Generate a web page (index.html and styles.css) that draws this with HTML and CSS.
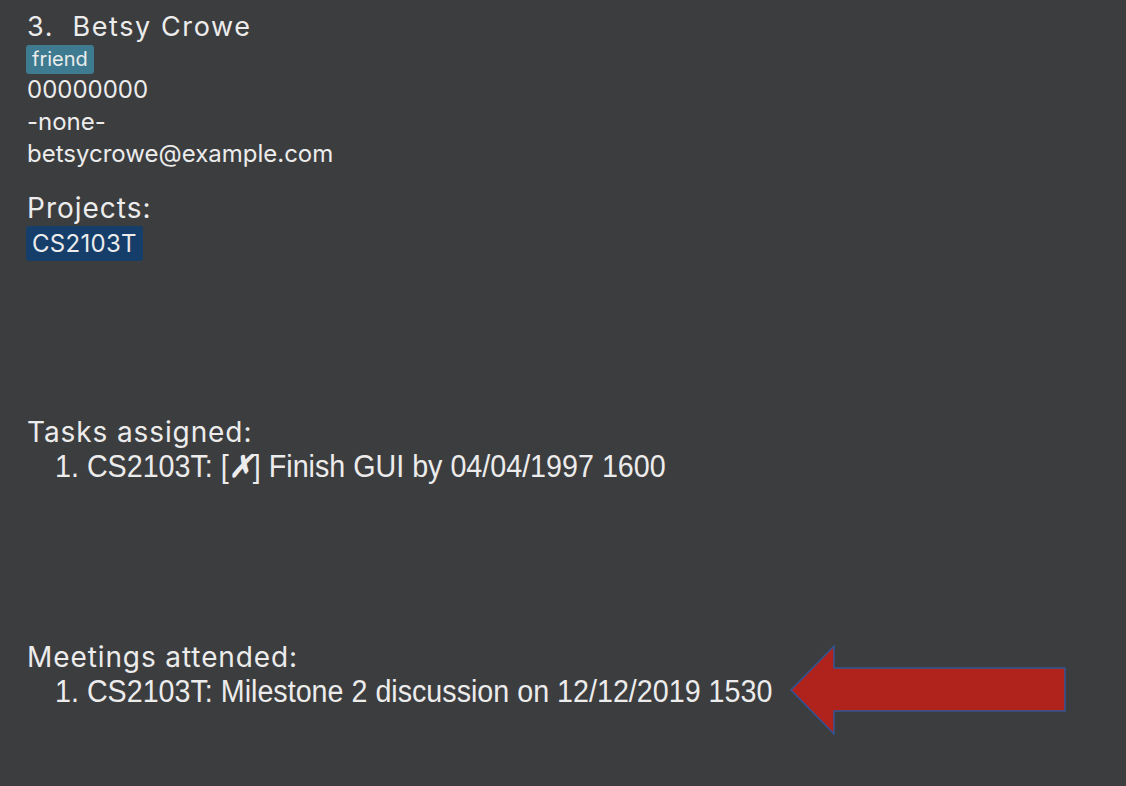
FILE: index.html
```html
<!DOCTYPE html>
<html>
<head>
<meta charset="utf-8">
<link rel="stylesheet" href="styles.css">
</head>
<body>
<div class="card">
  <div class="title">3.&nbsp; Betsy Crowe</div>
  <div class="tags"><span class="tag">friend</span></div>
  <div class="line">00000000</div>
  <div class="line">-none-</div>
  <div class="line">betsycrowe@example.com</div>
  <div class="heading projects-h">Projects:</div>
  <div class="tags"><span class="proj">CS2103T</span></div>
  <div class="section tasks">
    <div class="heading">Tasks assigned:</div>
    <div class="item"><span class="item-text">1. CS2103T: [<b class="x">✗</b>] Finish GUI by 04/04/1997 1600</span></div>
  </div>
  <div class="section meetings">
    <div class="heading">Meetings attended:</div>
    <div class="item"><span class="item-text">1. CS2103T: Milestone 2 discussion on 12/12/2019 1530</span></div>
  </div>
</div>
<svg class="arrow" width="290" height="100" viewBox="780 640 290 100">
  <polygon points="791,690 834,646 834,668 1065,668 1065,711 834,711 834,734" fill="#b0231c" stroke="#2f5597" stroke-width="1.5"/>
</svg>
</body>
</html>
```
FILE: styles.css
```css
html, body {
  margin: 0;
  padding: 0;
  background: #3c3d3f;
  height: 100%;
}
body {
  color: #ececec;
  font-family: Inter, "Noto Sans", sans-serif;
  position: relative;
  overflow: hidden;
}
.card {
  padding: 10px 0 0 27px;
  display: flex;
  flex-direction: column;
  align-items: flex-start;
}
.title {
  font-size: 27px;
  line-height: 34px;
  letter-spacing: 1.6px;
}
.tags {
  display: flex;
  margin-left: -1px;
}
.tag {
  background: #3e7b91;
  border-radius: 3px;
  font-size: 20px;
  line-height: 29px;
  padding: 0 6px;
  margin-top: 1px;
}
.line {
  font-size: 24px;
  line-height: 32px;
}
.heading {
  font-size: 28px;
  line-height: 34px;
  letter-spacing: 0.9px;
}
.projects-h {
  margin-top: 21px;
  letter-spacing: 1px;
}
.proj {
  background: #153e6a;
  border-radius: 3px;
  font-size: 24px;
  line-height: 35px;
  padding: 0 6px;
  margin-top: 1px;
  letter-spacing: 0.3px;
}
.tasks {
  margin-top: 154px;
}
.meetings {
  margin-top: 155px;
}
.item {
  font-family: "Liberation Sans", Arial, sans-serif;
  font-size: 31px;
  line-height: 36px;
  padding-left: 28px;
  white-space: nowrap;
}
.item-text {
  display: inline-block;
  transform: scaleX(0.925);
  transform-origin: left center;
}
.x {
  font-weight: bold;
  font-style: italic;
}
.arrow {
  position: absolute;
  left: 780px;
  top: 640px;
}
```
